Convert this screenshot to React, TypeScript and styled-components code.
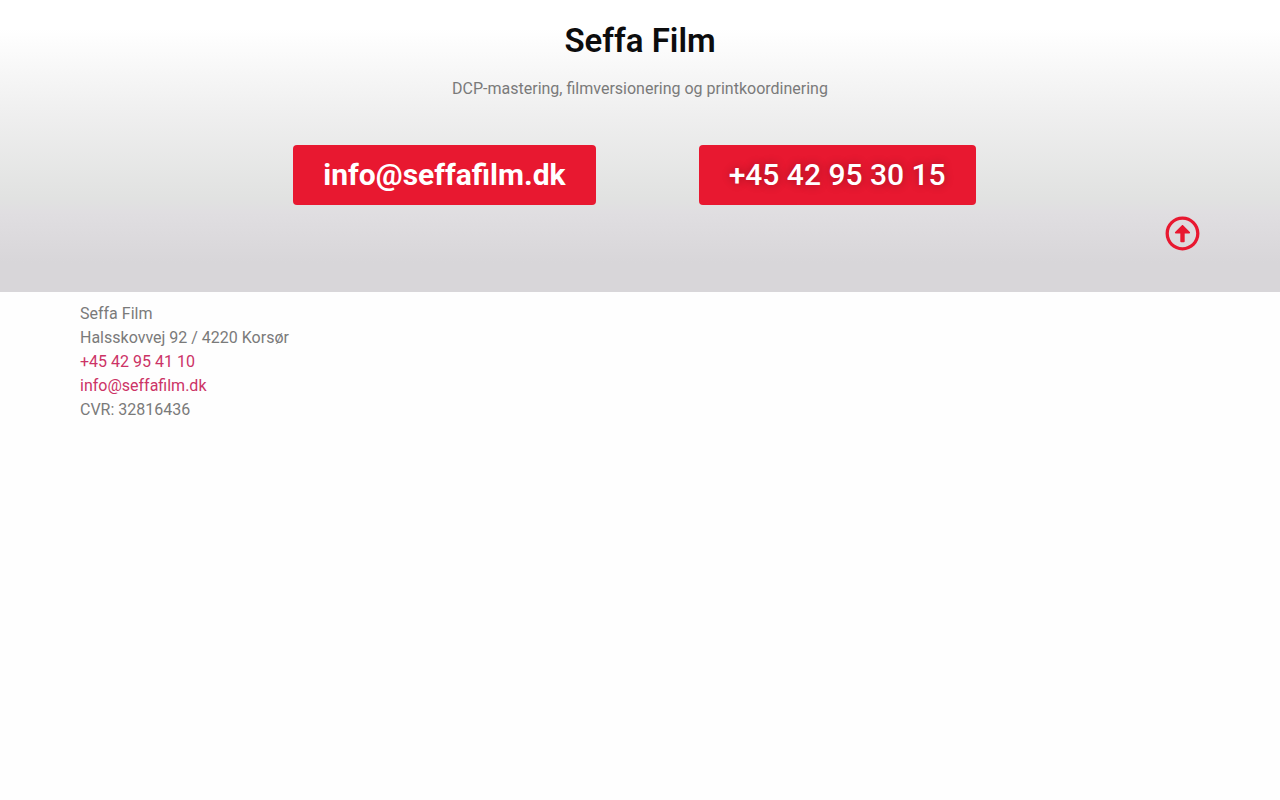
import React from "react";
import styled, { createGlobalStyle } from "styled-components";
import { FaRegArrowAltCircleUp } from "react-icons/fa";

const GlobalStyle = createGlobalStyle`
  *, *::before, *::after { box-sizing: border-box; }
  html { background: #fefefe; }
  body {
    margin: 0;
    color: #7a7a7a;
    font: 400 16px/24px Roboto, sans-serif;
  }
  a { text-decoration: none; }
`;

const Hero = styled.header`
  padding: 20px 10px 40px;
  background: linear-gradient(180deg, #fff 10%, #f0f0f0 37%, #e1e2e1 68%, #e0dee1 73%, #d8d6d9 90%);
`;

const Container = styled.div`
  max-width: 1140px;
  margin: 0 auto;
  padding: 0 10px;
`;

const Title = styled.h1`
  margin: 0;
  color: #0c0c0d;
  font-size: 33px;
  font-weight: 600;
  line-height: 42px;
  text-align: center;
`;

const Tagline = styled.p`
  margin: 15px 0 44px;
  text-align: center;
`;

const Actions = styled.div`
  display: flex;
  flex-wrap: wrap;
  justify-content: center;
  gap: 20px 103px;
  padding-right: 11px;
`;

const ActionLink = styled.a<{ $weight: number; $shadow?: boolean }>`
  padding: 15px 30px;
  border-radius: 4px;
  background: #e81830;
  color: #fff;
  font-size: 30px;
  font-weight: ${(p) => p.$weight};
  line-height: 30px;
  text-shadow: ${(p) => (p.$shadow ? "0 0 10px rgba(0, 0, 0, 0.3)" : "none")};
`;

const TopRow = styled.div`
  display: flex;
  justify-content: flex-end;
  align-items: center;
  height: 37px;
  margin-top: 10px;
`;

const TopLink = styled.a`
  display: flex;
  color: #e81830;
  font-size: 35px;
`;

const Footer = styled.footer`
  padding: 10px;
`;

const Address = styled.address`
  font-style: normal;
`;

const Line = styled.div``;

const ContactLink = styled.a`
  color: #cc3366;
`;

export default function App() {
  return (
    <>
      <GlobalStyle />
      <Hero id="top">
        <Container>
          <Title>Seffa Film</Title>
          <Tagline>DCP-mastering, filmversionering og printkoordinering</Tagline>
          <Actions>
            <ActionLink href="mailto:info@seffafilm.dk" $weight={700}>
              info@seffafilm.dk
            </ActionLink>
            <ActionLink href="tel:+4542953015" $weight={500} $shadow>
              +45 42 95 30 15
            </ActionLink>
          </Actions>
          <TopRow>
            <TopLink href="#top" aria-label="Til toppen">
              <FaRegArrowAltCircleUp />
            </TopLink>
          </TopRow>
        </Container>
      </Hero>
      <Footer>
        <Container>
          <Address>
            <Line>Seffa Film</Line>
            <Line>Halsskovvej 92 / 4220 Korsør</Line>
            <Line>
              <ContactLink href="tel:+4542954110">+45 42 95 41 10</ContactLink>
            </Line>
            <Line>
              <ContactLink href="mailto:info@seffafilm.dk">info@seffafilm.dk</ContactLink>
            </Line>
            <Line>CVR: 32816436</Line>
          </Address>
        </Container>
      </Footer>
    </>
  );
}
